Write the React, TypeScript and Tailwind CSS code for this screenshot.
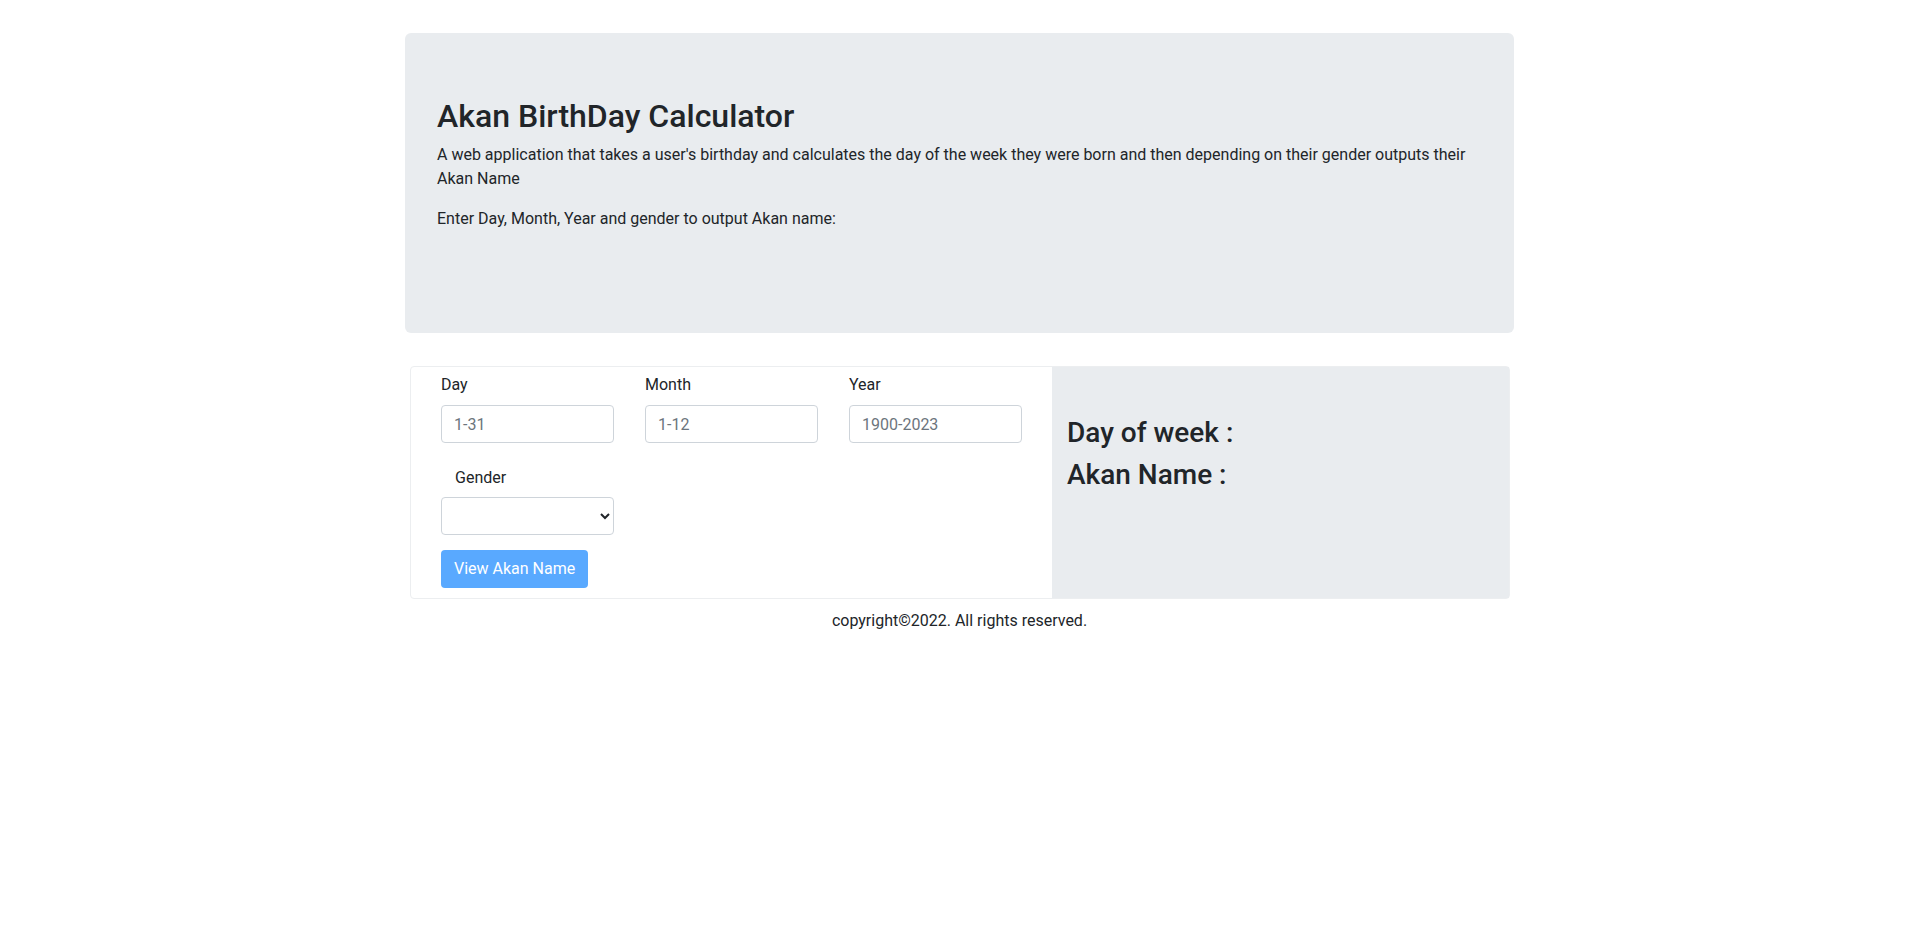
const App = () => {
  return (
    <div className="min-h-screen bg-white font-['Roboto','Liberation_Sans',sans-serif] text-[16px] text-[#212529]">
      <div className="ml-[405px] w-[1109px] pt-[33px]">
        <div className="rounded-[6px] bg-[#e9ecef] px-8 pt-16 pb-[102px]">
          <h2 className="mb-2 text-[32px] font-medium leading-[1.2]">Akan BirthDay Calculator</h2>
          <p className="mb-4 leading-6">
            A web application that takes a user's birthday and calculates the day of the week they were born and then
            depending on their gender outputs their Akan Name
          </p>
          <p className="leading-6">Enter Day, Month, Year and gender to output Akan name:</p>
        </div>

        <div className="mt-[33px] ml-[5px] flex w-[1100px] rounded-[4px] border border-[#eceef0]">
          <div className="flex w-[641px] flex-col pt-[6px] pb-[10px] pl-[30px]">
            <div className="flex gap-[31px]">
              <Field label="Day" placeholder="1-31" />
              <Field label="Month" placeholder="1-12" />
              <Field label="Year" placeholder="1900-2023" />
            </div>
            <label className="mt-[23px] ml-[14px] leading-6">Gender</label>
            <select className="mt-[7px] h-[38px] w-[173px] rounded-[4px] border border-[#ced4da] bg-white px-2 text-[16px]">
              <option value=""></option>
              <option value="male">Male</option>
              <option value="female">Female</option>
            </select>
            <button className="mt-[15px] h-[38px] w-fit whitespace-nowrap rounded-[4px] bg-[#59a9ff] px-[13px] text-[16px] text-white">
              View Akan Name
            </button>
          </div>
          <div className="flex-1 bg-[#e9ecef] pt-[49px] pl-[15px]">
            <h3 className="mb-2 text-[28px] font-medium leading-[1.2]">Day of week :</h3>
            <h3 className="mb-2 text-[28px] font-medium leading-[1.2]">Akan Name :</h3>
          </div>
        </div>

        <p className="mt-[10px] text-center leading-6">copyright©2022. All rights reserved.</p>
      </div>
    </div>
  );
};

const Field = ({ label, placeholder }: { label: string; placeholder: string }) => (
  <div className="flex w-[173px] flex-col">
    <label className="mb-[8px] leading-6">{label}</label>
    <input
      type="text"
      placeholder={placeholder}
      className="h-[38px] w-[173px] rounded-[4px] border border-[#ced4da] bg-white px-3 text-[16px] placeholder:text-[#6c757d]"
    />
  </div>
);

export default App;
